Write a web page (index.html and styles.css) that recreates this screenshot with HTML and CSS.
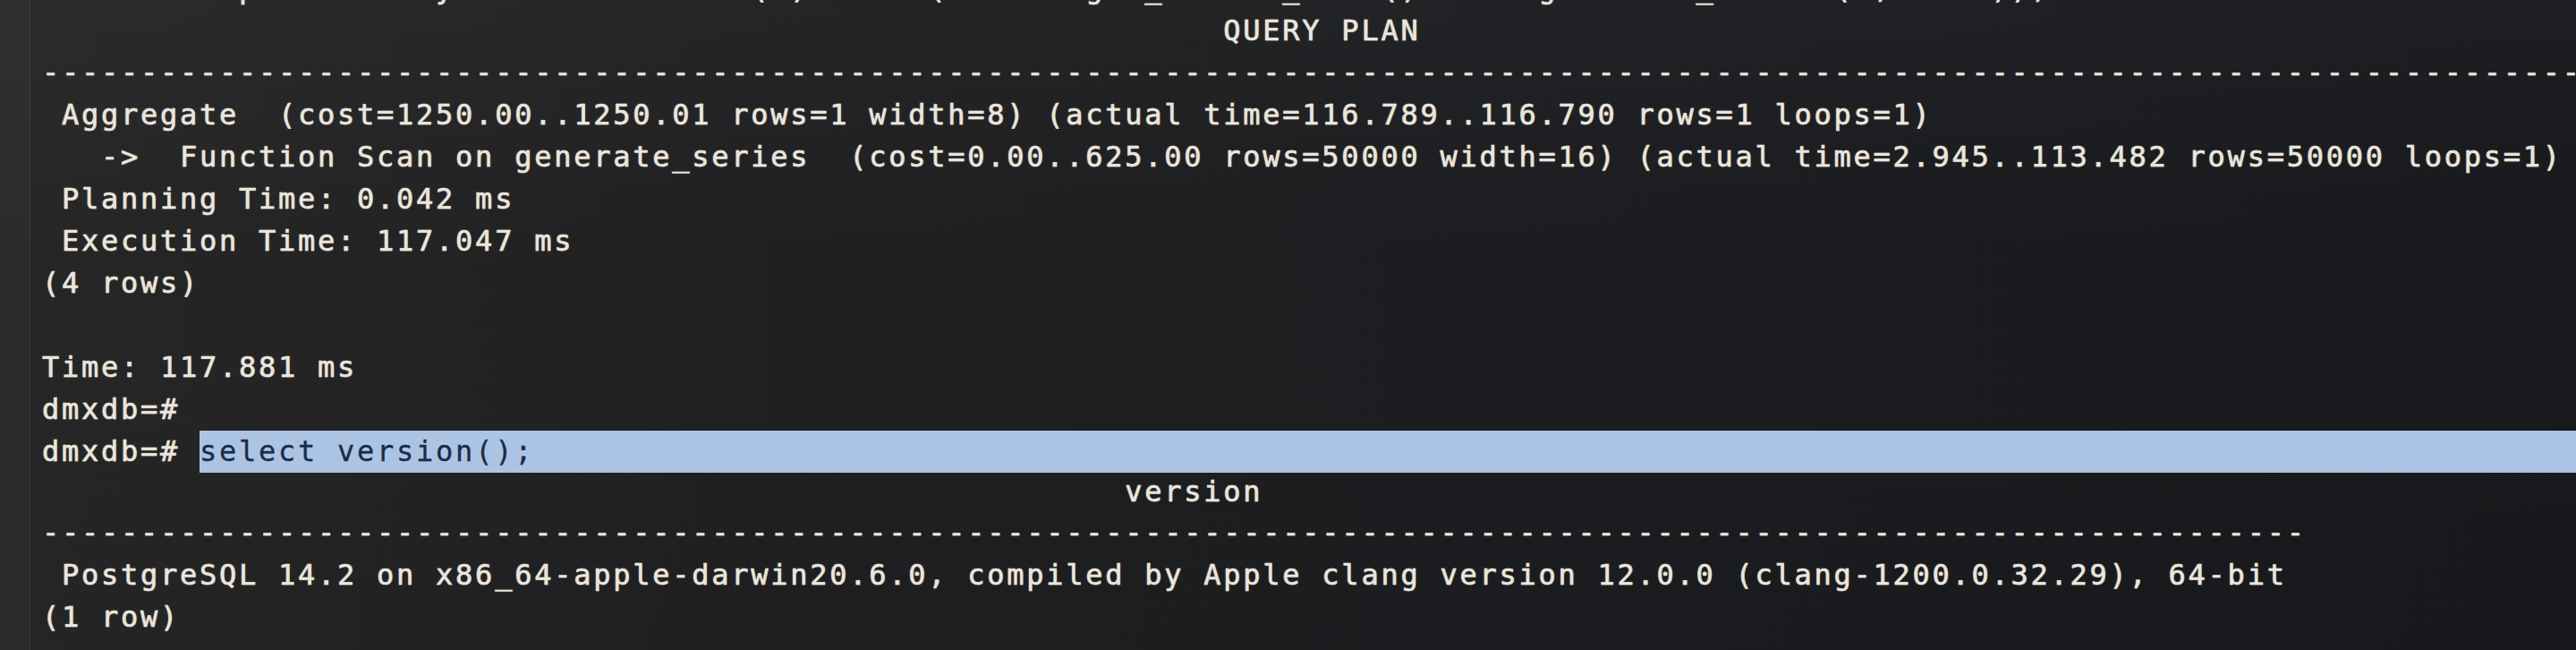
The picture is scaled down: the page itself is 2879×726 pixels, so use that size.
FILE: index.html
```html
<!DOCTYPE html>
<html>
<head>
<meta charset="utf-8">
<link rel="stylesheet" href="styles.css">
<title>psql</title>
</head>
<body>
<div class="edge"></div>
<div class="term">
<div class="line cut">dmxdb=# explain analyze select count(*) from (select gen_random_uuid() from generate_series(1,50000));</div>
<div class="line">                                                            QUERY PLAN</div>
<div class="line">----------------------------------------------------------------------------------------------------------------------------------</div>
<div class="line"> Aggregate  (cost=1250.00..1250.01 rows=1 width=8) (actual time=116.789..116.790 rows=1 loops=1)</div>
<div class="line">   -&gt;  Function Scan on generate_series  (cost=0.00..625.00 rows=50000 width=16) (actual time=2.945..113.482 rows=50000 loops=1)</div>
<div class="line"> Planning Time: 0.042 ms</div>
<div class="line"> Execution Time: 117.047 ms</div>
<div class="line">(4 rows)</div>
<div class="line"> </div>
<div class="line">Time: 117.881 ms</div>
<div class="line">dmxdb=# </div>
<div class="line flexline"><span>dmxdb=# </span><span class="sel">select version();</span></div>
<div class="line tight">                                                       version</div>
<div class="line">-------------------------------------------------------------------------------------------------------------------</div>
<div class="line"> PostgreSQL 14.2 on x86_64-apple-darwin20.6.0, compiled by Apple clang version 12.0.0 (clang-1200.0.32.29), 64-bit</div>
<div class="line">(1 row)</div>
</div>
</body>
</html>
```
FILE: styles.css
```css
html, body {
  margin: 0;
  padding: 0;
  width: 2879px;
  height: 726px;
  overflow: hidden;
}
body {
  position: relative;
  background:
    linear-gradient(to bottom, rgba(255,255,255,0.025) 0%, rgba(0,0,0,0) 40%, rgba(0,0,0,0.03) 100%),
    linear-gradient(to right, #2b2b2b 0px, #2b2b2b 32px, #262627 35px, #202022 30%, #1c1d20 60%, #18191c 100%);
}
.edge {
  position: absolute;
  left: 33px;
  top: 0;
  width: 1px;
  height: 726px;
  background: rgba(70, 70, 70, 0.6);
}
.term {
  padding: 11px 0 0 47px;
  font-family: "DejaVu Sans Mono", monospace;
  font-size: 32px;
  letter-spacing: 2.74px;
  color: #ebe6dc;
  -webkit-text-stroke: 0.5px #ebe6dc;
  text-shadow: 0 0 1.5px rgba(240, 232, 220, 0.6);
}
.line {
  height: 47px;
  line-height: 47px;
  white-space: pre;
}
.cut {
  margin-top: -47px;
}
.tight {
  height: 44px;
  line-height: 42px;
}
.flexline {
  display: flex;
  margin-right: -47px;
}
.sel {
  flex: 1;
  background: #abc4e4;
  color: #1b2a48;
  -webkit-text-stroke: 0.3px #1b2a48;
  text-shadow: none;
}
```
